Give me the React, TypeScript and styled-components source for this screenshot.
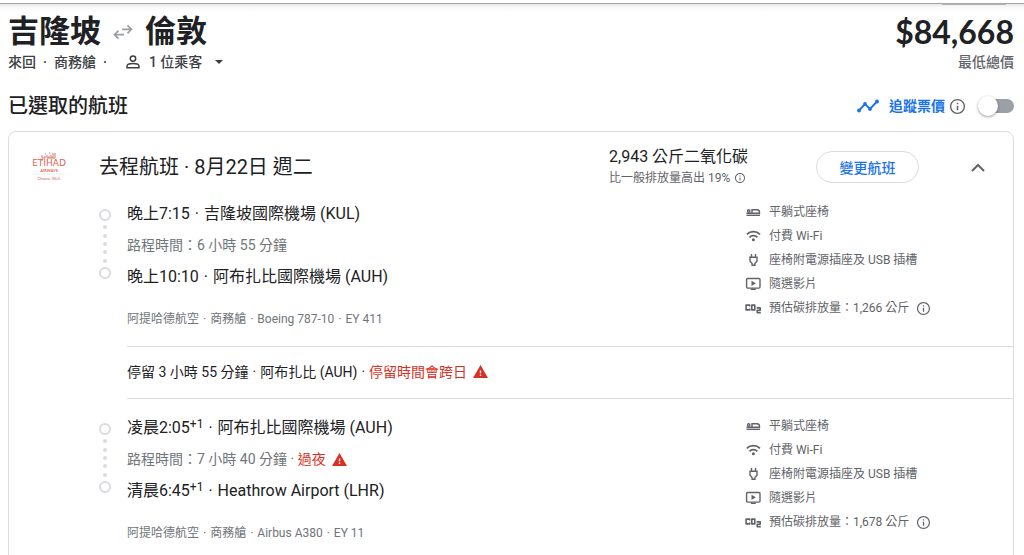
import React from "react";
import styled, { createGlobalStyle } from "styled-components";

const Global = createGlobalStyle`
  *, *::before, *::after { box-sizing: border-box; }
  body {
    margin: 0;
    background: #fff;
    color: #202124;
    font-family: Roboto, "Noto Sans CJK TC", sans-serif;
    font-size: 14px;
    line-height: 20px;
  }
  h1, h2, h3, p, ul, ol { margin: 0; padding: 0; font-weight: 400; list-style: none; }
  button { font-family: inherit; background: none; border: 0; padding: 0; cursor: pointer; }
`;

const TopEdge = styled.div`
  display: flex;
  justify-content: flex-end;
  height: 12px;
  padding: 1px 18px 0;
  border-top: 3px solid #fff;
  background: linear-gradient(#a6a6a6 0 1px, #e6e6e6 1px, #f8f8f8 4px, #fff);
`;

const TabEdge = styled.span`
  width: 64px;
  height: 1px;
  background: #b4b4b4;
`;

const Page = styled.main`
  padding: 0 10px 0 8px;
`;

const Between = styled.div`
  display: flex;
  justify-content: space-between;
  align-items: flex-start;
`;

const Route = styled.h1`
  display: flex;
  align-items: center;
  gap: 12px;
  font-size: 31px;
  line-height: 40px;
  font-weight: 700;
`;

const TripInfo = styled.div`
  display: flex;
  align-items: center;
  color: #3c4043;
  font-weight: 500;
  line-height: 20px;
  gap: 7px;
`;

const Passengers = styled.button`
  display: flex;
  align-items: center;
  gap: 9px;
  margin-left: 12px;
  font-size: 14px;
  font-weight: 500;
  line-height: 20px;
  color: #3c4043;
`;

const Total = styled.div`
  text-align: right;
  color: #5f6368;
  font-weight: 500;
`;

const Price = styled.div`
  font-family: Lato, sans-serif;
  font-size: 32px;
  line-height: 40px;
  font-weight: 700;
  color: #202124;
`;

const SectionBar = styled(Between)`
  align-items: center;
  height: 34px;
  margin-top: 17px;
`;

const SectionTitle = styled.h2`
  font-size: 20px;
  line-height: 28px;
  font-weight: 500;
`;

const Track = styled.label`
  display: flex;
  align-items: center;
  color: #1a73e8;
  font-weight: 700;
  cursor: pointer;
  svg:first-child { margin-right: 10px; }
  svg:nth-of-type(2) { margin: 0 13px 0 5px; }
`;

const Switch = styled.input`
  appearance: none;
  display: flex;
  align-items: center;
  width: 36px;
  height: 14px;
  margin: 0;
  border-radius: 7px;
  background: linear-gradient(90deg, transparent 8px, #9aa0a6 8px);
  &::before {
    content: "";
    width: 20px;
    height: 20px;
    flex: none;
    border-radius: 50%;
    background: #fff;
    box-shadow: 0 1px 3px rgba(0, 0, 0, 0.4);
  }
`;

const Card = styled.section`
  margin-top: 8px;
  padding-bottom: 32px;
  border: 1px solid #dadce0;
  border-radius: 8px;
`;

const CardHead = styled.header`
  display: grid;
  grid-template-columns: 90px 1fr 207px 103px 94px;
  align-items: center;
  height: 70px;
  margin-bottom: 1px;
`;

const Logo = styled.svg`
  margin-left: 22px;
`;

const CardTitle = styled.h3`
  font-size: 20px;
  line-height: 28px;
`;

const Emissions = styled.div`
  font-size: 16px;
  line-height: 22px;
`;

const EmissionsNote = styled.div`
  display: flex;
  align-items: center;
  gap: 5px;
  font-size: 12px;
  line-height: 20px;
  color: #5f6368;
`;

const ChangeButton = styled.button`
  height: 32px;
  border: 1px solid #dadce0;
  border-radius: 16px;
  color: #1a73e8;
  font-size: 14px;
  font-weight: 500;
`;

const Collapse = styled.button`
  display: flex;
  justify-self: end;
  margin-right: 28px;
  color: #5f6368;
`;

const Leg = styled.article`
  display: grid;
  grid-template-columns: 28px 1fr 268px;
  margin-left: 90px;
`;

const Rail = styled.div`
  display: flex;
  flex-direction: column;
  align-items: center;
  justify-content: space-between;
  width: 12px;
  height: 70px;
  margin-top: 6px;
`;

const Stop = styled.span`
  width: 12px;
  height: 12px;
  border: 2px solid #dadce0;
  border-radius: 50%;
`;

const Dot = styled.span`
  width: 4px;
  height: 4px;
  border-radius: 50%;
  background: #dadce0;
`;

const Point = styled.p`
  display: flex;
  gap: 5px;
  font-size: 16px;
  line-height: 22px;
  sup { font-size: 12px; line-height: 0; vertical-align: 5px; }
`;

const Duration = styled.p`
  display: flex;
  align-items: center;
  margin: 10px 0;
  line-height: 21px;
  color: #70757a;
`;

const Detail = styled.p`
  display: flex;
  gap: 4px;
  margin-top: 22px;
  font-size: 12px;
  line-height: 18px;
  color: #70757a;
`;

const Alert = styled.span`
  display: inline-flex;
  align-items: center;
  gap: 6px;
  color: #d93025;
`;

const Amenities = styled.ul`
  display: flex;
  flex-direction: column;
  gap: 6px;
  font-size: 12px;
  line-height: 18px;
  color: #5f6368;
`;

const Amenity = styled.li`
  display: flex;
  align-items: center;
  gap: 8px;
  height: 18px;
`;

const Layover = styled.div`
  display: flex;
  align-items: center;
  gap: 4px;
  height: 53px;
  margin: 18px 0 18px 118px;
  padding-bottom: 2px;
  border: solid #dadce0;
  border-width: 1px 0;
`;

const Info = ({ size }: { size: number }) => (
  <svg width={size} height={size} viewBox="2 2 20 20" fill="#5f6368" aria-hidden="true">
    <path d="M11 17h2v-6h-2v6zm1-15C6.48 2 2 6.48 2 12s4.48 10 10 10 10-4.48 10-10S17.52 2 12 2zm0 18.200c-4.500 0-8.200-3.700-8.200-8.200S7.500 3.800 12 3.800s8.200 3.700 8.200 8.200-3.700 8.200-8.200 8.200zM11 9h2V7h-2v2z" />
  </svg>
);

const Warning = () => (
  <svg width="15" height="13" viewBox="1 2 22 19" fill="#d93025" aria-hidden="true">
    <path d="M1 21h22L12 2 1 21zm12-3h-2v-2h2v2zm0-4h-2v-4h2v4z" />
  </svg>
);

const icons: Record<string, React.ReactNode> = {
  bed: (
    <g fill="none" stroke="currentColor" strokeWidth="1.400">
      <path d="M1.500 11.300h13.500" />
      <circle cx="3.700" cy="7" r="1.200" />
      <path d="M1.500 9.200h13V8.300q0-2.600-2.600-2.600H7v3.500" />
    </g>
  ),
  wifi: (
    <g fill="none" stroke="currentColor" strokeWidth="1.800">
      <path d="M1.800 6.400a9.300 9.300 0 0 1 13.200 0M4.400 9.300a5.700 5.700 0 0 1 8 0" />
      <circle cx="8.400" cy="11.700" r="1.500" fill="currentColor" stroke="none" />
    </g>
  ),
  plug: (
    <g fill="none" stroke="currentColor" strokeWidth="1.400">
      <path d="M6.500 2v3.500M10.500 2v3.500M5 5.300h7v3.900L9.900 11.500v1.700H7.100v-1.700L5 9.200z" />
    </g>
  ),
  video: (
    <g fill="none" stroke="currentColor" strokeWidth="1.400">
      <rect x="1.600" y="2.500" width="13.400" height="9.600" rx="1" />
      <path d="M5.800 13.300h5" />
      <path d="M6.500 4.700v5.200l4.400-2.600z" fill="currentColor" stroke="none" />
    </g>
  ),
  co2: (
    <g fill="none" stroke="currentColor" strokeWidth="1.600" strokeLinejoin="round">
      <path d="M4.700 6.600V5.100H1.100v4.800h3.600V8.400M6.800 5.100h3v4.800h-3zM11.600 7.900h3.600v2.300h-3v2.400h3.600" />
    </g>
  ),
};

const EtihadLogo = () => (
  <Logo width="36" height="30" viewBox="0 0 36 30" role="img" aria-label="Etihad Airways" fill="#dc6555" textAnchor="middle">
    <path d="M11 3v3h3V4m2 2V3m0 3h4V3m-2 3V4m4-3v5h-2m4-5v5h-2m-8-4h1m3-1h1m-9 7h2m4 0h1" fill="none" stroke="#dc6555" strokeWidth=".9" />
    <text x="18" y="14" fontSize="9" fontFamily="DejaVu Sans, sans-serif">ETIHAD</text>
    <text x="18" y="20" fontSize="4" fontFamily="Lato, sans-serif" fontWeight="700">AIRWAYS</text>
    <path d="M2 22h32" stroke="#e6e6e6" strokeWidth=".7" />
    <text x="18" y="28" fontSize="4" fontFamily="Lato, sans-serif">Choose Well.</text>
  </Logo>
);

const dotted = (parts: React.ReactNode[]) =>
  parts.map((part, i) => (
    <React.Fragment key={i}>
      {i > 0 && <span>·</span>}
      <span>{part}</span>
    </React.Fragment>
  ));

type LegData = {
  from: React.ReactNode[];
  time: string;
  overnight?: boolean;
  to: React.ReactNode[];
  detail: string[];
  co2: string;
};

const FlightLeg = ({ from, time, overnight, to, detail, co2 }: LegData) => {
  const amenities = [
    ["bed", "平躺式座椅"],
    ["wifi", "付費 Wi-Fi"],
    ["plug", "座椅附電源插座及 USB 插槽"],
    ["video", "隨選影片"],
    ["co2", `預估碳排放量：${co2} 公斤`],
  ];
  return (
    <Leg>
      <Rail>
        <Stop /><Dot /><Dot /><Dot /><Dot /><Dot /><Stop />
      </Rail>
      <div>
        <Point>{dotted(from)}</Point>
        <Duration>
          路程時間：{time}
          {overnight && <>&nbsp;·&nbsp;<Alert>過夜 <Warning /></Alert></>}
        </Duration>
        <Point>{dotted(to)}</Point>
        <Detail>{dotted(detail)}</Detail>
      </div>
      <Amenities>
        {amenities.map(([icon, label]) => (
          <Amenity key={icon}>
            <svg width="16" height="16" viewBox="0 0 16 16" aria-hidden="true">{icons[icon]}</svg>
            {label}
            {icon === "co2" && <Info size={13} />}
          </Amenity>
        ))}
      </Amenities>
    </Leg>
  );
};

export default function App() {
  return (
    <>
      <Global />
      <TopEdge><TabEdge /></TopEdge>
      <Page>
        <Between>
          <div>
            <Route>
              吉隆坡
              <svg width="20" height="16" viewBox="0 0 20 16" fill="none" stroke="#9aa0a6" strokeWidth="1.700" aria-hidden="true">
                <path d="M9 5.300h9M14.500 1.300l4 4-4 4M11 10.700H2M5.500 6.700l-4 4 4 4" />
              </svg>
              倫敦
            </Route>
            <TripInfo>
              <span>來回</span><span>·</span><span>商務艙</span><span>·</span>
              <Passengers>
                <svg width="14" height="14" viewBox="0 0 14 14" fill="none" stroke="#3c4043" strokeWidth="1.500" aria-hidden="true">
                  <circle cx="7" cy="3.600" r="2.700" />
                  <path d="M1 12.700v-1.500C1 9.300 4.500 8.500 7 8.500s6 .8 6 2.700v1.500z" />
                </svg>
                1 位乘客
                <svg width="20" height="8" viewBox="0 0 20 8" fill="#3c4043" aria-hidden="true"><path d="M4 2h8L8 6z" /></svg>
              </Passengers>
            </TripInfo>
          </div>
          <Total>
            <Price>$84,668</Price>
            最低總價
          </Total>
        </Between>
        <SectionBar>
          <SectionTitle>已選取的航班</SectionTitle>
          <Track>
            <svg width="22" height="14" viewBox="0 0 22 14" fill="#1a73e8" aria-hidden="true">
              <path d="M2 11.500 8 5l5 5 7-7.500" fill="none" stroke="#1a73e8" strokeWidth="1.900" />
              <circle cx="2" cy="11.500" r="1.900" /><circle cx="8" cy="5" r="1.900" /><circle cx="13" cy="10" r="1.900" /><circle cx="20" cy="2.500" r="1.900" />
            </svg>
            追蹤票價
            <Info size={15} />
            <Switch type="checkbox" role="switch" />
          </Track>
        </SectionBar>
        <Card>
          <CardHead>
            <EtihadLogo />
            <CardTitle>去程航班 · 8月22日 週二</CardTitle>
            <div>
              <Emissions>2,943 公斤二氧化碳</Emissions>
              <EmissionsNote>比一般排放量高出 19% <Info size={10} /></EmissionsNote>
            </div>
            <ChangeButton>變更航班</ChangeButton>
            <Collapse aria-label="收合">
              <svg width="14" height="9" viewBox="0 0 14 9" fill="none" stroke="currentColor" strokeWidth="2"><path d="M1 8l6-6 6 6" /></svg>
            </Collapse>
          </CardHead>
          <FlightLeg
            from={["晚上7:15", "吉隆坡國際機場 (KUL)"]}
            time="6 小時 55 分鐘"
            to={["晚上10:10", "阿布扎比國際機場 (AUH)"]}
            detail={["阿提哈德航空", "商務艙", "Boeing 787-10", "EY 411"]}
            co2="1,266"
          />
          <Layover>
            {dotted(["停留 3 小時 55 分鐘", "阿布扎比 (AUH)", <Alert>停留時間會跨日 <Warning /></Alert>])}
          </Layover>
          <FlightLeg
            from={[<>凌晨2:05<sup>+1</sup></>, "阿布扎比國際機場 (AUH)"]}
            time="7 小時 40 分鐘"
            overnight
            to={[<>清晨6:45<sup>+1</sup></>, "Heathrow Airport (LHR)"]}
            detail={["阿提哈德航空", "商務艙", "Airbus A380", "EY 11"]}
            co2="1,678"
          />
        </Card>
      </Page>
    </>
  );
}
